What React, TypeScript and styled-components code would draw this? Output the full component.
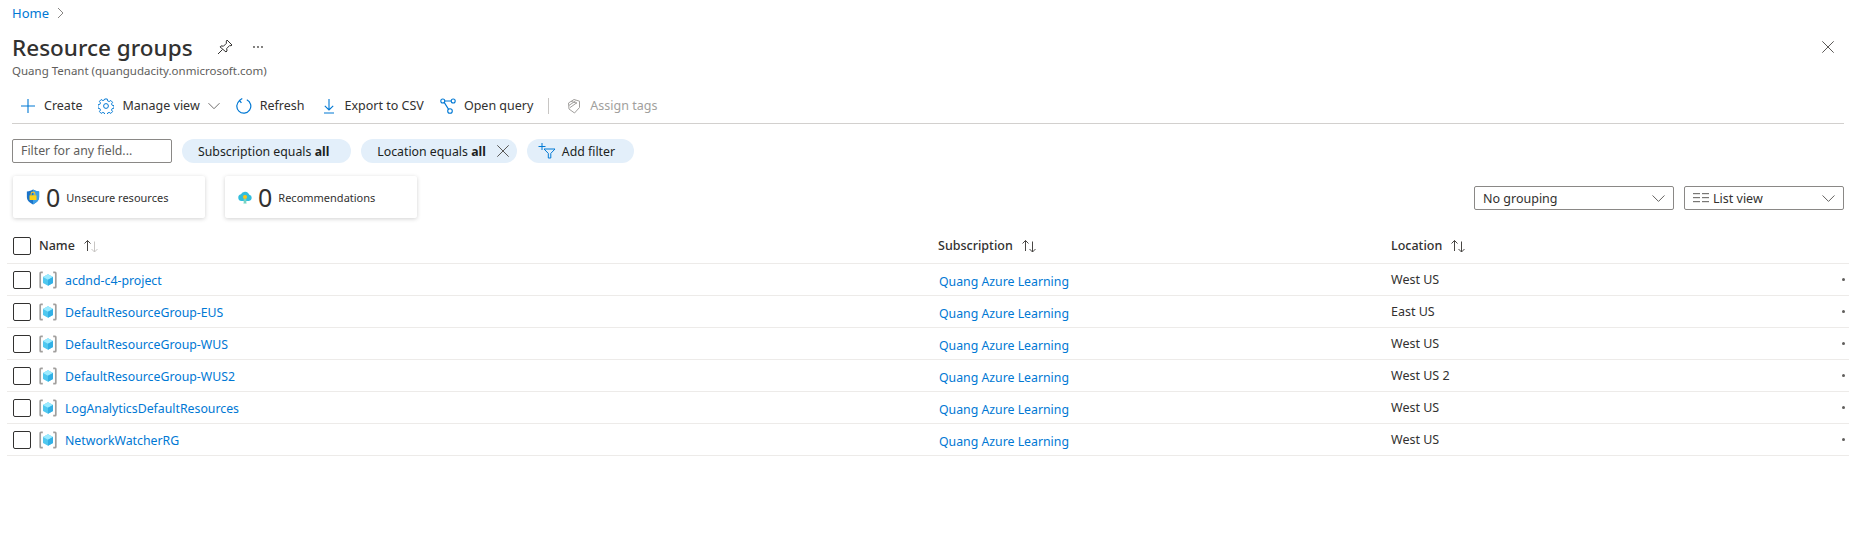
import React from "react";
import styled, { createGlobalStyle } from "styled-components";

const GlobalStyle = createGlobalStyle`
  html, body {
    margin: 0;
    padding: 0;
    background: #fff;
    overflow: hidden;
  }
  body {
    font-family: "Noto Sans", "Open Sans", sans-serif;
    font-size: 12.5px;
    color: #323130;
  }
  * {
    box-sizing: border-box;
  }
`;

const Page = styled.div`
  width: 1849px;
  height: 559px;
  padding-left: 12px;
  padding-right: 5px;
`;

const Breadcrumb = styled.nav`
  height: 26px;
  display: flex;
  align-items: center;
  gap: 8px;
  font-size: 13px;
  color: #0078d4;
`;

const TitleRow = styled.div`
  margin-top: 4px;
  height: 34px;
  display: flex;
  align-items: center;
`;

const Title = styled.h1`
  margin: 0;
  font-size: 22.5px;
  font-weight: 500;
  color: #323130;
`;

const TitleIcon = styled.span<{ $left: number }>`
  display: inline-flex;
  margin-left: ${(p) => p.$left}px;
`;

const CloseButton = styled.span`
  display: inline-flex;
  margin-left: auto;
  margin-right: 10px;
`;

const Subtitle = styled.div`
  height: 14px;
  line-height: 14px;
  font-size: 11.5px;
  color: #605e5c;
`;

const Toolbar = styled.div`
  margin-top: 11px;
  height: 35px;
  padding: 0 0 1px 8px;
  display: flex;
  align-items: center;
  gap: 16px;
  border-bottom: 1px solid #d2d0ce;
`;

const ToolButton = styled.div<{ $disabled?: boolean }>`
  display: flex;
  align-items: center;
  gap: 8px;
  font-size: 12.5px;
  color: ${(p) => (p.$disabled ? "#a19f9d" : "#323130")};
`;

const ToolDivider = styled.span`
  width: 1px;
  height: 16px;
  background: #c8c6c4;
  margin-left: -1px;
  margin-right: 1px;
`;

const FilterRow = styled.div`
  margin-top: 15px;
  height: 24px;
  display: flex;
  align-items: center;
  gap: 10px;
`;

const FilterInput = styled.div`
  width: 160px;
  height: 24px;
  border: 1px solid #8a8886;
  border-radius: 2px;
  padding-left: 8px;
  line-height: 22px;
  font-size: 12.3px;
  color: #605e5c;
`;

const Pill = styled.div<{ $gap?: number; $left?: number; $right?: number }>`
  height: 24px;
  padding: 0 ${(p) => p.$right ?? 22}px 0 ${(p) => p.$left ?? 16}px;
  display: flex;
  align-items: center;
  gap: ${(p) => p.$gap ?? 0}px;
  border-radius: 12px;
  background: #e3effa;
  font-size: 12.3px;
  color: #201f1e;
  white-space: pre;

  b {
    font-weight: 700;
  }
`;

const SummaryRow = styled.div`
  margin-top: 13px;
  display: flex;
  align-items: flex-start;
`;

const Card = styled.div`
  width: 192px;
  height: 42px;
  margin-left: 1px;
  margin-right: 19px;
  padding-left: 12px;
  display: flex;
  align-items: center;
  border-radius: 2px;
  box-shadow: 0 1px 4px rgba(0, 0, 0, 0.18);
  background: #fff;
`;

const CardIcon = styled.span`
  width: 16px;
  display: flex;
  justify-content: center;
`;

const CardCount = styled.span`
  margin-left: 5px;
  margin-right: 6px;
  font-size: 25px;
  font-weight: 400;
  color: #323130;
  line-height: 1;
`;

const CardLabel = styled.span`
  font-size: 11px;
  color: #323130;
`;

const Dropdowns = styled.div`
  margin-left: auto;
  margin-top: 10px;
  display: flex;
  gap: 10px;
`;

const Dropdown = styled.div<{ $width: number }>`
  width: ${(p) => p.$width}px;
  height: 24px;
  padding: 0 8px;
  display: flex;
  align-items: center;
  gap: 4px;
  border: 1px solid #8a8886;
  border-radius: 2px;
  font-size: 12.5px;
  color: #323130;

  svg:last-child {
    margin-left: auto;
  }
`;

const Table = styled.div`
  margin-left: -5px;
  margin-right: -5px;
`;

const columns = "32px 899px 453px 1fr 8px";

const HeaderRow = styled.div`
  margin-top: 10px;
  height: 36px;
  display: grid;
  grid-template-columns: ${columns};
  align-items: center;
  border-bottom: 1px solid #edebe9;
  font-size: 12.5px;
  font-weight: 500;
`;

const Row = styled.div`
  height: 32px;
  display: grid;
  grid-template-columns: ${columns};
  align-items: center;
  border-bottom: 1px solid #edebe9;
  font-size: 12.5px;
`;

const Checkbox = styled.span`
  display: block;
  width: 18px;
  height: 18px;
  margin-left: 6px;
  border: 1px solid #323130;
  border-radius: 2px;
`;

const HeaderCell = styled.div`
  display: flex;
  align-items: center;
  gap: 8px;
`;

const NameCell = styled.div`
  display: flex;
  align-items: center;
  gap: 8px;
`;

const Link = styled.a`
  color: #0078d4;
  font-size: 12.3px;
  text-decoration: none;
`;

const NameLink = styled(Link)`
  padding-top: 2px;
`;

const SubscriptionLink = styled(Link)`
  display: block;
  margin-left: 1px;
  padding-top: 3px;
`;

const LocationCell = styled.div`
  color: #323130;
`;

const RowEnd = styled.div`
  padding-left: 1px;
  display: flex;
  gap: 4px;
`;

const Dot = styled.i`
  flex: none;
  width: 3px;
  height: 3px;
  border-radius: 50%;
  background: #605e5c;
`;

const PlusIcon = () => (
  <svg width="16" height="16" viewBox="0 0 16 16" fill="none" stroke="#0078d4" strokeWidth="1.1">
    <path d="M8 1v14M1 8h14" />
  </svg>
);

const GearIcon = () => (
  <svg width="16" height="16" viewBox="0 0 16 16" fill="none" stroke="#0078d4" strokeWidth="1">
    <circle cx="8" cy="8" r="2.4" />
    <path d="M6.7 .6h2.600l.4 2 1.600.7 1.800-1.100 1.800 1.900-1.100 1.700.7 1.500 2 .4v2.600l-2 .4-.7 1.500 1.100 1.700-1.800 1.900-1.800-1.100-1.600.7-.4 2H6.700l-.4-2-1.600-.7-1.800 1.100-1.800-1.900 1.100-1.700-.7-1.500-2-.4V6.700l2-.4.700-1.500-1.100-1.700 1.800-1.900 1.800 1.100 1.600-.7z" transform="translate(8 8) scale(.95) translate(-8 -8)" />
  </svg>
);

const ChevronIcon = ({ size = 12, color = "#605e5c" }: { size?: number; color?: string }) => (
  <svg width={size} height={size} viewBox="0 0 12 12" fill="none" stroke={color} strokeWidth="0.9">
    <path d="M0.5 3.2 6 8.7l5.500-5.500" />
  </svg>
);

const RefreshIcon = () => (
  <svg width="16" height="16" viewBox="0 0 16 16" fill="none" stroke="#0078d4" strokeWidth="1.200">
    <path d="M10.800 1.800A7 7 0 1 1 3.800 2.400" />
    <path d="M6.300 0.500 3.500 2.300l1.900 2.600" />
  </svg>
);

const DownloadIcon = () => (
  <svg width="16" height="16" viewBox="0 0 16 16" fill="none" stroke="#0078d4" strokeWidth="1.100">
    <path d="M8 1v11M3.800 7.800 8 12l4.200-4.200M3 15h10" />
  </svg>
);

const QueryIcon = () => (
  <svg width="16" height="16" viewBox="0 0 16 16" fill="none" stroke="#0078d4" strokeWidth="1.100">
    <circle cx="2.800" cy="3" r="2" />
    <circle cx="13.200" cy="3" r="2" />
    <circle cx="10" cy="13" r="2.300" />
    <path d="M4.800 3h6.400M4.200 4.400l4.400 7" />
  </svg>
);

const TagIcon = () => (
  <svg width="16" height="16" viewBox="0 0 16 16" fill="none" stroke="#a19f9d" strokeWidth="1">
    <path d="M2.500 5 8 1.500l5.500 1.700v6.300L8.500 15 3 11z" />
    <path d="M5 3.400 11 5.200M3 7.400 9.500 3M4 9.600l7-5" />
  </svg>
);

const FilterPlusIcon = () => (
  <svg width="18" height="16" viewBox="0 0 18 16" fill="none" stroke="#0078d4" strokeWidth="1">
    <path d="M4 0v7M0.500 3.500h7" />
    <path d="M6 6h11l-4.200 4.400V15H10.300v-4.600z" />
  </svg>
);

const CrossIcon = ({ size = 12 }: { size?: number }) => (
  <svg width={size} height={size} viewBox="0 0 12 12" fill="none" stroke="#484644" strokeWidth="0.9">
    <path d="M0.300 0.300 11.700 11.700M11.700 0.300 0.300 11.700" />
  </svg>
);

const PinIcon = () => (
  <svg width="16" height="16" viewBox="0 0 16 16" fill="none" stroke="#323130" strokeWidth="1">
    <path d="M10 1 15 6l-1 .8-1.300-.3-3 3 .3 2.500-1 1L3 7.900l1-1 2.500.3 3-3-.3-1.300z" />
    <path d="M5.500 10.500 1 15" />
  </svg>
);

const ShieldIcon = () => (
  <svg width="14" height="16" viewBox="0 0 16 18">
    <path d="M8 0.500c2 1.400 4 2 7 2.200v6.300c0 4-3.200 6.700-7 8.500-3.800-1.800-7-4.500-7-8.500V2.700c3-.2 5-.8 7-2.200z" fill="#1b74c9" />
    <path d="M8 0.500c2 1.400 4 2 7 2.200v6.300c0 4-3.200 6.700-7 8.500z" fill="#3c9fe6" />
    <path d="M5.800 7V5.600a2.200 2.200 0 0 1 4.400 0V7" fill="none" stroke="#f2c230" strokeWidth="1.200" />
    <rect x="4" y="7" width="8" height="5.500" rx="0.600" fill="#fcd116" />
  </svg>
);

const CloudIcon = () => (
  <svg width="16" height="16" viewBox="0 0 18 18">
    <path d="M5 13.500a3.800 3.800 0 0 1-.6-7.500 5 5 0 0 1 9.400.6 3.500 3.500 0 0 1-.3 6.900z" fill="#32bedd" />
    <path d="M7.500 11h3v6l-1.500-1-1.500 1z" fill="#76d4c4" />
    <circle cx="9" cy="9" r="2.300" fill="#fcc419" />
  </svg>
);

const GroupIcon = () => (
  <svg width="18" height="18" viewBox="0 0 18 18">
    <path d="M3.800 1.300H2a.8.8 0 0 0-.8.8v13.800c0 .4.4.8.8.8h1.800M14.200 1.300H16c.4 0 .8.400.8.800v13.800c0 .4-.4.8-.8.8h-1.800" fill="none" stroke="#a19f9d" strokeWidth="1.700" />
    <path d="M9 3.200 14 6v6l-5 2.800L4 12V6z" fill="#50c8ef" />
    <path d="M9 3.200 14 6 9 8.800 4 6z" fill="#9cebff" />
    <path d="M9 8.800V14.800L14 12V6z" fill="#32b0e6" />
  </svg>
);

const SortIcon = ({ downColor }: { downColor: string }) => (
  <svg width="16" height="14" viewBox="0 0 16 14" fill="none" strokeWidth="1">
    <path d="M4.500 12V1.500M1.500 4.500l3-3 3 3" stroke="#484644" />
    <path d="M11.500 2.500V13M8.500 10l3 3 3-3" stroke={downColor} />
  </svg>
);

const ListIcon = () => (
  <svg width="16" height="12" viewBox="0 0 16 12" fill="#797775">
    <rect x="0" y="1" width="7" height="1.200" />
    <rect x="0" y="5" width="7" height="1.200" />
    <rect x="0" y="9" width="7" height="1.200" />
    <rect x="9" y="1" width="7" height="1.200" />
    <rect x="9" y="5" width="7" height="1.200" />
    <rect x="9" y="9" width="7" height="1.200" />
  </svg>
);

const rows = [
  { name: "acdnd-c4-project", location: "West US" },
  { name: "DefaultResourceGroup-EUS", location: "East US" },
  { name: "DefaultResourceGroup-WUS", location: "West US" },
  { name: "DefaultResourceGroup-WUS2", location: "West US 2" },
  { name: "LogAnalyticsDefaultResources", location: "West US" },
  { name: "NetworkWatcherRG", location: "West US" },
];

function App() {
  return (
    <Page>
      <GlobalStyle />
      <Breadcrumb>
        Home
        <svg width="8" height="12" viewBox="0 0 8 12" fill="none" stroke="#797775" strokeWidth="0.9">
          <path d="M1 1l5 5-5 5" />
        </svg>
      </Breadcrumb>
      <TitleRow>
        <Title>Resource groups</Title>
        <TitleIcon $left={24}>
          <PinIcon />
        </TitleIcon>
        <TitleIcon $left={19}>
          <svg width="12" height="4" viewBox="0 0 12 4" fill="#484644">
            <circle cx="2" cy="2" r="0.9" />
            <circle cx="6" cy="2" r="0.9" />
            <circle cx="10" cy="2" r="0.9" />
          </svg>
        </TitleIcon>
        <CloseButton>
          <CrossIcon />
        </CloseButton>
      </TitleRow>
      <Subtitle>Quang Tenant (quangudacity.onmicrosoft.com)</Subtitle>
      <Toolbar>
        <ToolButton>
          <PlusIcon />
          Create
        </ToolButton>
        <ToolButton>
          <GearIcon />
          Manage view
          <ChevronIcon />
        </ToolButton>
        <ToolButton>
          <RefreshIcon />
          Refresh
        </ToolButton>
        <ToolButton>
          <DownloadIcon />
          Export to CSV
        </ToolButton>
        <ToolButton>
          <QueryIcon />
          Open query
        </ToolButton>
        <ToolDivider />
        <ToolButton $disabled>
          <TagIcon />
          Assign tags
        </ToolButton>
      </Toolbar>
      <FilterRow>
        <FilterInput>Filter for any field...</FilterInput>
        <Pill>
          <span>
            Subscription equals <b>all</b>
          </span>
        </Pill>
        <Pill $right={8} $gap={11}>
          <span>
            Location equals <b>all</b>
          </span>
          <CrossIcon />
        </Pill>
        <Pill $left={11} $right={19} $gap={6}>
          <FilterPlusIcon />
          Add filter
        </Pill>
      </FilterRow>
      <SummaryRow>
        <Card>
          <CardIcon>
            <ShieldIcon />
          </CardIcon>
          <CardCount>0</CardCount>
          <CardLabel>Unsecure resources</CardLabel>
        </Card>
        <Card>
          <CardIcon>
            <CloudIcon />
          </CardIcon>
          <CardCount>0</CardCount>
          <CardLabel>Recommendations</CardLabel>
        </Card>
        <Dropdowns>
          <Dropdown $width={200}>
            No grouping
            <ChevronIcon size={13} />
          </Dropdown>
          <Dropdown $width={160}>
            <ListIcon />
            List view
            <ChevronIcon size={13} />
          </Dropdown>
        </Dropdowns>
      </SummaryRow>
      <Table>
        <HeaderRow>
          <Checkbox />
          <HeaderCell>
            Name <SortIcon downColor="#c8c6c4" />
          </HeaderCell>
          <HeaderCell>
            Subscription <SortIcon downColor="#484644" />
          </HeaderCell>
          <HeaderCell>
            Location <SortIcon downColor="#484644" />
          </HeaderCell>
        </HeaderRow>
        {rows.map((row) => (
          <Row key={row.name}>
            <Checkbox />
            <NameCell>
              <GroupIcon />
              <NameLink>{row.name}</NameLink>
            </NameCell>
            <div>
              <SubscriptionLink>Quang Azure Learning</SubscriptionLink>
            </div>
            <LocationCell>{row.location}</LocationCell>
            <RowEnd>
              <Dot />
              <Dot />
            </RowEnd>
          </Row>
        ))}
      </Table>
    </Page>
  );
}

export default App;
